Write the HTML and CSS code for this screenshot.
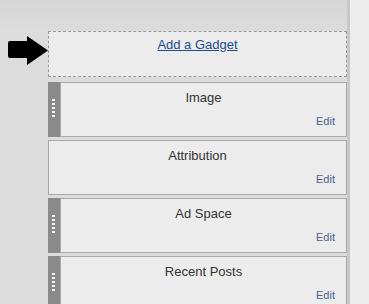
FILE: index.html
```html
<!DOCTYPE html>
<html lang="en">
<head>
    <meta charset="UTF-8">
    <title>Layout</title>
    <link rel="stylesheet" href="styles.css">
</head>
<body>
    <div class="main">
        <div class="add-gadget">
            <svg class="arrow" width="42" height="30" viewBox="0 0 42 30">
                <path d="M3 5 L20 5 L20 0 L41 14.5 L20 29 L20 22 L3 22 Q1 22 1 20 L1 7 Q1 5 3 5 Z" fill="#000"/>
            </svg>
            <a href="#">Add a Gadget</a>
        </div>

        <div class="widget">
            <div class="handle"><span></span><span></span><span></span><span></span><span></span></div>
            <div class="widget-body">
                <div class="title">Image</div>
                <a href="#" class="edit">Edit</a>
            </div>
        </div>
        <div class="widget">
            <div class="widget-body">
                <div class="title">Attribution</div>
                <a href="#" class="edit">Edit</a>
            </div>
        </div>
        <div class="widget">
            <div class="handle"><span></span><span></span><span></span><span></span><span></span></div>
            <div class="widget-body">
                <div class="title">Ad Space</div>
                <a href="#" class="edit">Edit</a>
            </div>
        </div>
        <div class="widget">
            <div class="handle"><span></span><span></span><span></span><span></span><span></span></div>
            <div class="widget-body">
                <div class="title">Recent Posts</div>
                <a href="#" class="edit">Edit</a>
            </div>
        </div>
    </div>
    <div class="side"></div>
</body>
</html>
```

FILE: styles.css
```css
body {
    margin: 0;
    display: flex;
    height: 304px;
    overflow: hidden;
    font-family: "Liberation Sans", Arial, sans-serif;
    background: #ececec;
}
.main {
    width: 299px;
    padding: 31px 0 0 48px;
    background: linear-gradient(180deg, #d6d6d6 0, #dcdcdc 30px, #dcdcdc 100%);
}
.side {
    flex: 1;
    border-left: 3px solid #c8c8c8;
    background: #ececec;
}
.add-gadget {
    position: relative;
    height: 44px;
    border: 1px dashed #9a9a9a;
    background: #ececec;
    text-align: center;
}
.add-gadget a {
    display: inline-block;
    margin-top: 5px;
    font-size: 13px;
    color: #1d4c8c;
    text-decoration: underline;
}
.arrow {
    position: absolute;
    left: -42px;
    top: 4px;
}
.widget {
    display: flex;
    height: 55px;
    margin-top: 3px;
}
.add-gadget + .widget {
    margin-top: 5px;
}
.handle {
    width: 12px;
    background: #8a8a8a;
    display: flex;
    flex-direction: column;
    gap: 2px;
    padding: 17px 0 0 4px;
    box-sizing: border-box;
}
.handle span {
    width: 3px;
    height: 2px;
    background: #f4f4f4;
}
.widget-body {
    flex: 1;
    border: 1px solid #a9a9a9;
    background: #ececec;
    display: flex;
    flex-direction: column;
    padding: 7px 11px 0 0;
}
.title {
    text-align: center;
    font-size: 13px;
    color: #333;
    line-height: 15px;
    padding-left: 11px;
}
.edit {
    align-self: flex-end;
    margin-top: 10px;
    font-size: 11px;
    color: #4a6088;
    text-decoration: none;
}
```
